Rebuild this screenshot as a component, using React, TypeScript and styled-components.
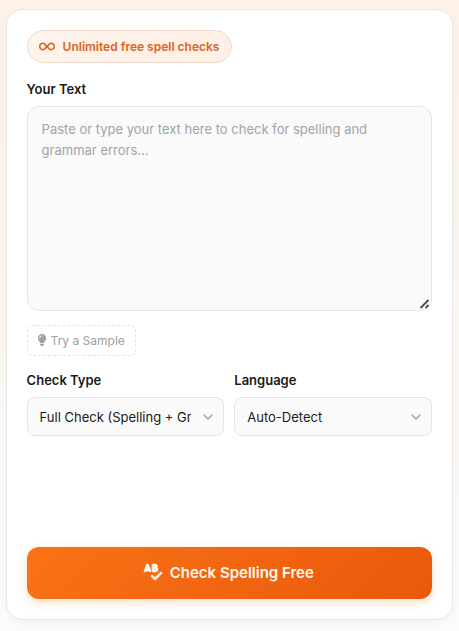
import React from "react";
import styled, { createGlobalStyle } from "styled-components";
import { FaInfinity, FaLightbulb, FaSpellCheck } from "react-icons/fa6";

const GlobalStyle = createGlobalStyle`
  *, *::before, *::after { box-sizing: border-box; }
  body {
    margin: 0;
    font-family: Inter, "Liberation Sans", sans-serif;
    color: #1a1a1a;
    background: #fdfcfb;
  }
`;

const Page = styled.main`
  height: 631px;
  padding: 9px 6px 11px;
  overflow: hidden;
  background: linear-gradient(180deg, #fff2e7 0%, #fef6ee 35%, #fcfaf8 75%, #fcfcfc 100%);
`;

const Card = styled.section`
  display: flex;
  flex-direction: column;
  align-items: flex-start;
  height: 611px;
  padding: 20px 20px 20px 19.6px;
  border: 1px solid #e8e7e6;
  border-radius: 16px;
  background: #fff;
  box-shadow: 0 4px 16px rgba(0, 0, 0, 0.035);
`;

const Badge = styled.div`
  display: flex;
  align-items: center;
  gap: 8px;
  height: 33px;
  padding: 0 12px 0 11px;
  border: 1px solid #efd9cd;
  border-radius: 17px;
  background: linear-gradient(135deg, #fff4eb, #ffefe5);
  color: #da641f;
  font-size: 12px;
  font-weight: 600;
  white-space: nowrap;
  svg { width: 16px; height: 13px; }
`;

const Label = styled.label`
  display: block;
  height: 17px;
  font-size: 13px;
  font-weight: 600;
  line-height: 17px;
`;

const TextField = styled.div`
  display: flex;
  flex-direction: column;
  gap: 8px;
  width: 100%;
  margin-top: 18px;
`;

const TextFrame = styled.div`
  position: relative;
`;

const TextArea = styled.textarea`
  display: block;
  width: 100%;
  height: 205px;
  padding: 12px 14px;
  border: 1px solid #e4e5e8;
  border-radius: 12px;
  background: #fafafa;
  color: #1a1a1a;
  font: 400 13px/21px Inter, sans-serif;
  resize: vertical;
  outline: none;
  &::placeholder { color: #a1a4a7; opacity: 1; }
  &::-webkit-resizer { background: transparent; }
`;

const ResizeGrip = styled.svg`
  position: absolute;
  right: 2px;
  bottom: 1px;
  pointer-events: none;
`;

const SampleButton = styled.button`
  display: flex;
  align-items: center;
  gap: 4px;
  height: 31px;
  margin-top: 14px;
  padding: 0 10px 0 9px;
  border: 1px dashed #e4e4e4;
  border-radius: 6px;
  background: transparent;
  color: #a0a0a0;
  font: 400 12px Inter, sans-serif;
  white-space: nowrap;
  svg { width: 10px; height: 12px; margin-bottom: 2px; }
`;

const Options = styled.div`
  display: grid;
  grid-template-columns: 1fr 1fr;
  gap: 10px;
  width: 100%;
  margin-top: 16px;
`;

const Field = styled.div`
  display: flex;
  flex-direction: column;
  gap: 8px;
  min-width: 0;
`;

const SelectFrame = styled.div`
  display: grid;
  align-items: center;
  svg {
    grid-area: 1 / 1;
    justify-self: end;
    margin-right: 10.5px;
    pointer-events: none;
  }
`;

const Select = styled.select`
  grid-area: 1 / 1;
  appearance: none;
  width: 100%;
  height: 39px;
  padding: 0 32px 0 12px;
  border: 1px solid #e4e5e8;
  border-radius: 8px;
  background: #fafafa;
  color: #1a1a1a;
  font: 400 13px Inter, sans-serif;
  outline: none;
`;

const Submit = styled.button`
  display: flex;
  align-items: center;
  justify-content: center;
  gap: 8px;
  width: 100%;
  height: 52px;
  flex-shrink: 0;
  margin-top: auto;
  padding: 0 1px 2px 0;
  border: 0;
  border-radius: 12px;
  background: linear-gradient(135deg, #f97316, #ea580c);
  box-shadow: 0 3px 10px rgba(249, 115, 22, 0.25);
  color: #fff8ee;
  font: 600 15px Inter, sans-serif;
  svg {
    width: 18px;
    height: 16px;
    overflow: visible;
    stroke: currentColor;
    stroke-width: 20px;
  }
`;

function Dropdown({ id, label, options }: { id: string; label: string; options: string[] }) {
  return (
    <Field>
      <Label htmlFor={id}>{label}</Label>
      <SelectFrame>
        <Select id={id}>
          {options.map((option) => <option key={option}>{option}</option>)}
        </Select>
        <svg width="12" height="12" viewBox="0 0 12 12" fill="none" stroke="#9c9c9c" strokeWidth="1.25" strokeLinecap="round" strokeLinejoin="round" aria-hidden="true">
          <path d="m2 4 4 4 4-4" />
        </svg>
      </SelectFrame>
    </Field>
  );
}

export default function App() {
  return (
    <>
      <GlobalStyle />
      <Page>
        <Card>
          <Badge><FaInfinity />Unlimited free spell checks</Badge>
          <TextField>
            <Label htmlFor="text">Your Text</Label>
            <TextFrame>
              <TextArea id="text" placeholder="Paste or type your text here to check for spelling and grammar errors..." />
              <ResizeGrip width="11" height="11" viewBox="0 0 11 11" fill="none" stroke="#4c4c4c" strokeWidth="1.8" aria-hidden="true">
                <path d="M1.5 9 9.5 1M6.5 9l3-3" />
              </ResizeGrip>
            </TextFrame>
          </TextField>
          <SampleButton type="button"><FaLightbulb />Try a Sample</SampleButton>
          <Options>
            <Dropdown id="check-type" label="Check Type" options={["Full Check (Spelling + Grammar)"]} />
            <Dropdown id="language" label="Language" options={["Auto-Detect"]} />
          </Options>
          <Submit type="button"><FaSpellCheck />Check Spelling Free</Submit>
        </Card>
      </Page>
    </>
  );
}
